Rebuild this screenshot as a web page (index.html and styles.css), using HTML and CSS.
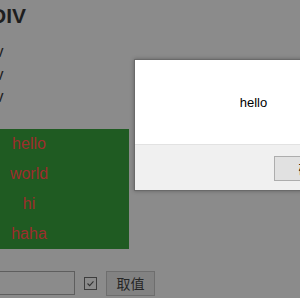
FILE: index.html
```html
<!doctype html>
<html lang="en">
<head>
  <meta charset="utf-8">
  <title>DIV</title>
  <link rel="stylesheet" href="styles.css">
</head>
<body>
  <div class="page">
    <h3 class="title">DIV</h3>
    <div class="line">div</div>
    <div class="line">div</div>
    <div class="line">div</div>
    <div class="green-box">
      <ul class="word-list">
        <li>hello</li>
        <li>world</li>
        <li>hi</li>
        <li>haha</li>
      </ul>
    </div>
    <div class="form-row">
      <input class="text-input" type="text">
      <span class="check-box">
        <svg viewBox="0 0 13 13" aria-hidden="true"><polyline points="3,6.5 5.5,9 10,4" /></svg>
      </span>
      <button class="get-btn" type="button">取值</button>
    </div>
  </div>

  <div class="dialog">
    <div class="dialog-body">hello</div>
    <div class="dialog-footer">
      <button class="ok-btn" type="button">确定</button>
    </div>
  </div>
</body>
</html>
```

FILE: styles.css
```css
:root {
  --mask: #8b8b8b;
  --green: #1f5b22;
  --red: #9e2d2d;
  --ink: #1e1e1e;
}

body {
  background: var(--mask);
  color: var(--ink);
  font-family: "Liberation Sans", Arial, sans-serif;
  margin: 0;
  overflow: hidden;
  height: 298px;
}

.page {
  margin-left: -17px;
}

.title {
  font-size: 21px;
  font-weight: bold;
  line-height: 24px;
  margin: 4px 0 13px 8px;
}

.line {
  font-size: 16px;
  line-height: 22.5px;
}

.green-box {
  background: var(--green);
  margin-top: 20px;
  width: 146px;
  height: 120px;
}

.word-list {
  list-style: none;
  margin: 0;
  padding: 0;
  width: 92px;
}

.word-list li {
  color: var(--red);
  font-size: 16px;
  line-height: 30px;
  text-align: center;
}

.form-row {
  align-items: center;
  display: flex;
  margin-top: 22px;
}

.text-input {
  background: transparent;
  border: 1px solid #5e5e5e;
  box-sizing: border-box;
  height: 24px;
  margin: 0;
  width: 92px;
}

.check-box {
  border: 1px solid #3d3d3d;
  box-sizing: border-box;
  display: block;
  height: 13px;
  margin-left: 9px;
  width: 13px;
}

.check-box svg {
  display: block;
  fill: none;
  height: 11px;
  stroke: #333;
  stroke-width: 1.3;
  width: 11px;
}

.get-btn {
  background: #828282;
  border: 1px solid #6e6e6e;
  color: #262626;
  font: 14px "Noto Sans CJK SC", sans-serif;
  height: 25px;
  margin-left: 9px;
  padding: 0;
  width: 49px;
}

.dialog {
  background: #fff;
  border: 1px solid #6a6a6a;
  box-shadow: 0 0 4px rgba(0, 0, 0, 0.3);
  position: absolute;
  left: 134px;
  top: 59px;
  width: 237px;
}

.dialog-body {
  color: #000;
  font-size: 13px;
  height: 84px;
  line-height: 86px;
  text-align: center;
}

.dialog-footer {
  background: #f0f0f0;
  border-top: 1px solid #e2e2e2;
  display: flex;
  height: 45px;
  justify-content: flex-end;
  align-items: center;
  padding-right: 23px;
}

.ok-btn {
  background: #e1e1e1;
  border: 1px solid #adadad;
  color: #000;
  font: 13px "Noto Sans CJK SC", sans-serif;
  height: 25px;
  margin-top: 2px;
  width: 75px;
  padding: 0;
}
```
